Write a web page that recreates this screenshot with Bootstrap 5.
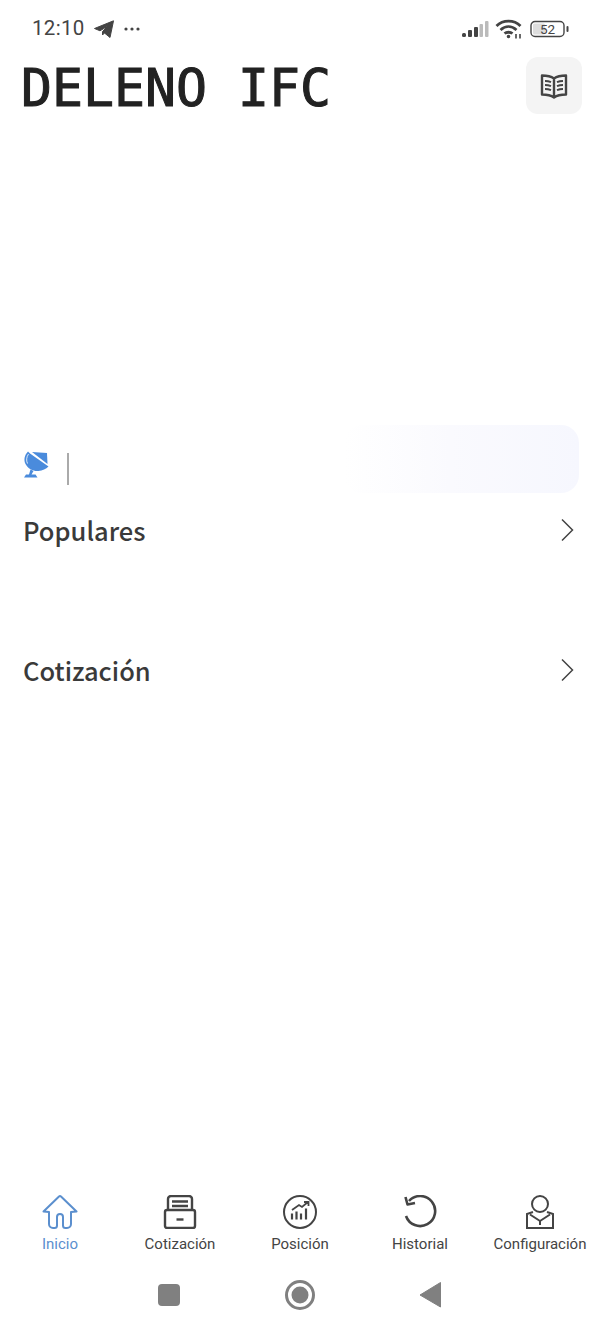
<!DOCTYPE html>
<html lang="es">
<head>
  <meta charset="UTF-8">
  <title>DELENO IFC</title>
  <link href="https://cdn.jsdelivr.net/npm/bootstrap@5.3.3/dist/css/bootstrap.min.css" rel="stylesheet">
  <style>
    body { height: 1333px; overflow: hidden; background: #fff; font-family: Roboto, sans-serif; }
    .status-bar { height: 57px; padding: 0 31px 0 32px; color: #444; }
    .status-time { font-size: 20.500px; letter-spacing: .3px; }
    .signal-icon { margin-right: -2px; }
    .head-row { height: 57px; padding: 0 18px 0 21px; }
    .app-title { font-family: "DejaVu Sans Mono", monospace; font-size: 51.500px; line-height: 62px; color: #222; margin: 0; -webkit-text-stroke: 1px #222; }
    .book-btn { width: 56px; height: 57px; background: #f4f4f4; border-radius: 12px; border: 0; padding: 0; }
    .banner-gap { height: 311px; }
    .notice-row { height: 68px; padding: 0 21px 0 23px; }
    .notice-mark { padding-top: 26px; }
    .notice-line { width: 2px; height: 32px; background: #aaa; margin-left: 18px; margin-top: 2px; }
    .notice-box { width: 235px; height: 68px; border-radius: 18px; background: linear-gradient(90deg, #fff 0%, #fafafe 45%, #f6f7fe 100%); }
    .section-row { padding: 0 26px 2px 23px; height: 76px; }
    .section-title { font-family: "Noto Sans CJK SC", sans-serif; font-weight: 500; font-size: 25.500px; color: #3a3a3a; margin: 0; }
    .section-gap { height: 64px; }
    .tab-bar { height: 76px; }
    .tab-item { width: 120px; color: #444; font-size: 15px; line-height: 18px; }
    .tab-item.is-active { color: #5b8fce; }
    .tab-item svg { display: block; margin-bottom: 6px; }
    .sys-nav { height: 62px; padding-bottom: 14px; }
  </style>
</head>
<body class="d-flex flex-column">
  <div class="status-bar d-flex align-items-center justify-content-between">
    <div class="d-flex align-items-center">
      <span class="status-time">12:10</span>
      <svg class="ms-2" width="22" height="18" viewBox="0 0 22 18"><path d="M1.500 8.500 20.500 .8 17 17.500 11.500 13 9.500 15 9.500 11.500 15 6 7 10.800Z" fill="#444" stroke="#444" stroke-linejoin="round"/></svg>
      <svg class="ms-2" width="18" height="6" viewBox="0 0 18 6" fill="#444"><circle cx="3" cy="3" r="1.600"/><circle cx="9" cy="3" r="1.600"/><circle cx="15" cy="3" r="1.600"/></svg>
    </div>
    <div class="d-flex align-items-center">
      <svg class="signal-icon" width="27" height="18" viewBox="0 0 27 18"><g fill="#444"><rect x="0" y="13" width="4" height="4" rx="1.500"/><rect x="6" y="10" width="4" height="7" rx="1"/><rect x="12" y="7" width="4" height="10" rx="1"/></g><g fill="#bbb"><rect x="17.500" y="4" width="3.500" height="13" rx="1"/><rect x="23" y="1" width="3.500" height="16" rx="1"/></g></svg>
      <svg class="ms-2" width="27" height="20" viewBox="0 0 27 20" fill="none" stroke="#444" stroke-width="2.800"><path d="M1.500 7C8 .5 19 .5 25.500 7"/><path d="M5.500 11C10.500 6.500 16.500 6.500 21.500 11"/><path d="M9.500 14.500C11.500 12.800 15.500 12.800 17.500 14.500"/><circle cx="13.500" cy="17.500" r=".8" fill="#444" stroke-width="2"/><path d="M21 15v4.500M25 15v4.500" stroke-width="1.600"/></svg>
      <svg class="ms-2" width="39" height="18" viewBox="0 0 39 18"><rect x="1" y="1.500" width="33" height="15" rx="4" fill="#fff" stroke="#444" stroke-width="1.400"/><rect x="3" y="3.500" width="12" height="11" rx="1.500" fill="#ddd"/><rect x="36.500" y="6" width="2" height="6" rx="1" fill="#444"/><text x="17.500" y="14" font-family="Roboto, sans-serif" font-size="13.500" text-anchor="middle" fill="#444">52</text></svg>
    </div>
  </div>

  <div class="head-row d-flex align-items-start justify-content-between">
    <h1 class="app-title">DELENO IFC</h1>
    <button class="book-btn d-flex align-items-center justify-content-center" type="button" aria-label="Guía">
      <svg width="28" height="26" viewBox="0 0 28 26" fill="none" stroke="#444" stroke-width="2.400"><path d="M14 5.500C10.500 3 6 2.500 2 2.500V21.500C6 21.500 10.500 22 14 24.500 17.500 22 22 21.500 26 21.500V2.500C22 2.500 17.500 3 14 5.500ZM14 5.500V24.500" stroke-linejoin="round"/><path d="M5 8c2 0 4 .3 6 1.200M5 12c2 0 4 .3 6 1.200M5 16c2 0 4 .3 6 1.200M23 8c-2 0-4 .3-6 1.200M23 12c-2 0-4 .3-6 1.200M23 16c-2 0-4 .3-6 1.200" stroke-width="2"/></svg>
    </button>
  </div>

  <div class="banner-gap"></div>

  <div class="notice-row d-flex justify-content-between">
    <div class="notice-mark d-flex align-items-start">
      <svg width="26" height="28" viewBox="0 0 26 28" fill="#4a8bdc"><path d="M5 .5C1.500 4 .5 9 2.500 13 5 18 10.500 20.500 15.500 20 19.500 19.500 23 18 25.500 15.500L7 2.500Z"/><path d="M9 1 24 2 24.500 13Z"/><path d="M5.500 3C3.500 6 3 9.500 4.500 12.500" fill="none" stroke="#fff" stroke-width=".8"/><path d="M7.500 18.500 6 23.500H3L1 26.500H14.500L12.500 23.500H8.500L10.500 20Z"/></svg>
      <div class="notice-line"></div>
    </div>
    <div class="notice-box"></div>
  </div>

  <div class="section-row d-flex align-items-center justify-content-between">
    <h2 class="section-title">Populares</h2>
    <svg width="13" height="24" viewBox="0 0 13 24" fill="none" stroke="#444" stroke-width="1.500"><path d="M1 1.500 11.500 12 1 22.500"/></svg>
  </div>
  <div class="section-gap"></div>
  <div class="section-row d-flex align-items-center justify-content-between">
    <h2 class="section-title">Cotización</h2>
    <svg width="13" height="24" viewBox="0 0 13 24" fill="none" stroke="#444" stroke-width="1.500"><path d="M1 1.500 11.500 12 1 22.500"/></svg>
  </div>

  <div class="flex-grow-1"></div>

  <nav class="tab-bar d-flex">
    <div class="tab-item is-active d-flex flex-column align-items-center">
      <svg width="36" height="34" viewBox="0 0 36 34" fill="none" stroke="#5b8fce" stroke-width="2" stroke-linejoin="round"><path d="M1.500 16.500 17 1.500a1.500 1.500 0 0 1 2 0L34.500 16.500 29 17V29a4 4 0 0 1-4 4h-1.500a2.500 2.500 0 0 1-2.500-2.500V22a3 3 0 0 0-6 0v8.500a2.500 2.500 0 0 1-2.500 2.500H11a4 4 0 0 1-4-4V17Z"/></svg>
      <span>Inicio</span>
    </div>
    <div class="tab-item d-flex flex-column align-items-center">
      <svg width="36" height="34" viewBox="0 0 36 34" fill="none" stroke="#444" stroke-width="2.400" stroke-linejoin="round"><path d="M6 15V4a3 3 0 0 1 3-3h18a3 3 0 0 1 3 3v11"/><path d="M10 6.500h16M10 11h16"/><rect x="3" y="15" width="30" height="18" rx="2"/><path d="M14.500 24.500h7"/></svg>
      <span>Cotización</span>
    </div>
    <div class="tab-item d-flex flex-column align-items-center">
      <svg width="36" height="34" viewBox="0 0 36 34" fill="none" stroke="#444" stroke-width="2"><circle cx="18" cy="17" r="16"/><path d="M10 24.500v-6M14.500 24.500v-8M19 24.500v-6M24 24.500v-11" stroke-width="2.200"/><path d="M10 15 17 10 20 12 26 7M22 7h4.500v4" stroke-width="1.800"/></svg>
      <span>Posición</span>
    </div>
    <div class="tab-item d-flex flex-column align-items-center">
      <svg width="36" height="34" viewBox="0 0 36 34" fill="none" stroke="#444" stroke-width="2.600"><path d="M7 6A15 15 0 1 1 4 21"/><path d="M3.500 2 5.500 9.500 13 8" stroke-linejoin="round"/></svg>
      <span>Historial</span>
    </div>
    <div class="tab-item d-flex flex-column align-items-center">
      <svg width="36" height="34" viewBox="0 0 36 34" fill="none" stroke="#444" stroke-width="2"><circle cx="18" cy="9" r="8"/><path d="M11 17 5 19V33H31V19L25 17"/><path d="M8 19.500 18 26 28 19.500M18 26V30M11 33H25" stroke-linejoin="round"/></svg>
      <span>Configuración</span>
    </div>
  </nav>

  <div class="sys-nav d-flex align-items-center justify-content-center">
    <svg width="300" height="32" viewBox="0 0 300 32" fill="#808080"><rect x="8" y="5" width="22" height="22" rx="4"/><circle cx="150" cy="16" r="13.500" fill="none" stroke="#808080" stroke-width="3"/><circle cx="150" cy="16" r="8.500"/><path d="M290.500 3.500V28L270 16Z" stroke="#808080" stroke-linejoin="round"/></svg>
  </div>

  <script src="https://cdn.jsdelivr.net/npm/bootstrap@5.3.3/dist/js/bootstrap.bundle.min.js"></script>
</body>
</html>
